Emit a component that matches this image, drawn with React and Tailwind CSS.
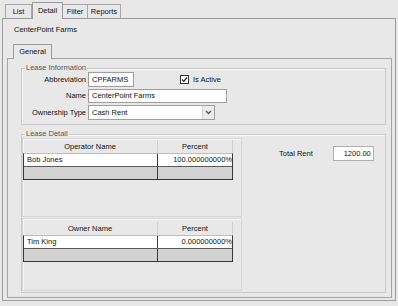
import React from 'react'

const bg = 'bg-[#e8e8e8]'

const Tab = ({ label, active, w }) => (
    <div
        className={
            active
                ? `${bg} h-[17px] -mb-[1px] border-t border-x border-[#9c9c9c] flex items-center justify-center relative z-10`
                : `${bg} h-[14px] border-t border-r border-[#a8a8a8] flex items-center justify-center`
        }
        style={{ width: w }}
    >
        {label}
    </div>
)

const Grid = ({ title, name, percent }) => (
    <div className="w-[210px]">
        <div className="flex h-[13px] items-center">
            <div className="w-[135px] h-full flex items-center justify-center border-r border-[#d0d0d0]">{title}</div>
            <div className="flex-1 h-full flex items-center justify-center border-r border-[#d0d0d0]">Percent</div>
        </div>
        <div className="border-x border-b border-[#3a3a3a] border-t border-t-[#bdbdbd]">
            <div className="flex h-[13px] bg-white border-b border-[#5a5a5a]">
                <div className="w-[134px] flex items-center pl-[3px] border-r border-[#3a3a3a]">{name}</div>
                <div className="flex-1 flex items-center justify-end overflow-hidden whitespace-nowrap pr-0">{percent}</div>
            </div>
            <div className="flex h-[12px] bg-[#d2d2d2]">
                <div className="w-[134px] border-r border-[#3a3a3a]"></div>
                <div className="flex-1"></div>
            </div>
        </div>
    </div>
)

const Legend = ({ children }) => (
    <div className={`-mt-[6px] ml-[3px] px-[1px] h-[9px] leading-[9px] w-fit text-[#555] ${bg}`}>{children}</div>
)

export default function App() {
    return (
        <div className={`w-[398px] h-[306px] ${bg} overflow-hidden font-['Liberation_Sans',Arial,sans-serif] text-[7.5px] leading-none text-[#111]`}>
            {/* top tabs */}
            <div className="mx-[2px] h-[19px] flex items-end pl-[3px] border-b border-[#9c9c9c]">
                <div className="h-[14px] w-[27px] border-l border-t border-r border-[#a8a8a8] flex items-center justify-center">List</div>
                <Tab label="Detail" active w={31} />
                <Tab label="Filter" w={25} />
                <Tab label="Reports" w={33} />
            </div>

            {/* outer panel */}
            <div className="mx-[2px] h-[282px] border-x border-b border-[#9c9c9c]">
                <div className="h-[25px] pl-[11px] pt-[7px]">CenterPoint Farms</div>

                <div className="ml-[10px] w-[39px] h-[15px] -mb-[1px] border-t border-x border-[#9c9c9c] flex items-center justify-center relative z-10 bg-[#e8e8e8]">
                    General
                </div>

                {/* inner panel */}
                <div className="ml-[4px] w-[385px] h-[240px] border border-[#a4a4a4]">
                    {/* Lease Information */}
                    <div className="ml-[13px] mt-[9px] w-[365px] h-[57px] border border-[#cacaca] shadow-[inset_1px_1px_0_#fafafa]">
                        <Legend>Lease Information</Legend>
                        <div className="flex items-center h-[15px]">
                            <div className="w-[66px] pr-[2px] text-right">Abbreviation</div>
                            <div className="w-[46px] h-[15px] bg-white border border-[#9e9e9e] flex items-center pl-[3px]">CPFARMS</div>
                            <div className="ml-[46px] w-[9px] h-[9px] border border-[#333] bg-white flex items-center justify-center">
                                <svg width="7" height="7" viewBox="0 0 7 7">
                                    <path d="M1 3.5 L2.8 5.3 L6 1.5" fill="none" stroke="#222" strokeWidth="1.2" />
                                </svg>
                            </div>
                            <div className="ml-[4px]">Is Active</div>
                        </div>
                        <div className="flex items-center h-[14px] mt-[2px]">
                            <div className="w-[66px] pr-[2px] text-right">Name</div>
                            <div className="w-[139px] h-[14px] bg-white border border-[#9e9e9e] flex items-center pl-[3px]">CenterPoint Farms</div>
                        </div>
                        <div className="flex items-center h-[15px] mt-[2px]">
                            <div className="w-[66px] pr-[2px] text-right">Ownership Type</div>
                            <div className="w-[127px] h-[15px] bg-white border border-[#9e9e9e] flex items-center">
                                <div className="flex-1 pl-[3px]">Cash Rent</div>
                                <div className="w-[12px] h-full bg-[#ececec] border-l border-[#d0d0d0] flex items-center justify-center">
                                    <svg width="7" height="5" viewBox="0 0 7 5">
                                        <path d="M1 1 L3.5 3.5 L6 1" fill="none" stroke="#555" strokeWidth="1.3" />
                                    </svg>
                                </div>
                            </div>
                        </div>
                    </div>

                    {/* Lease Detail */}
                    <div className="ml-[13px] mt-[9px] w-[365px] h-[159px] border border-[#cacaca] shadow-[inset_1px_1px_0_#fafafa]">
                        <Legend>Lease Detail</Legend>
                        <div className="flex">
                            <div className="w-[220px]">
                                <div className="h-[79px] border border-[#d6d6d6] shadow-[inset_1px_1px_0_#f8f8f8] pt-[1px]">
                                    <Grid title="Operator Name" name="Bob Jones" percent="100.000000000%" />
                                </div>
                                <div className="h-[73px] mt-[1px] border border-[#d6d6d6] shadow-[inset_1px_1px_0_#f8f8f8] pt-[3px]">
                                    <Grid title="Owner Name" name="Tim King" percent="0.000000000%" />
                                </div>
                            </div>
                            <div className="flex items-center h-[15px] mt-[8px] ml-[37px]">
                                <div>Total Rent</div>
                                <div className="ml-[20px] w-[41px] h-[15px] bg-white border border-[#b0b0b0] flex items-center justify-end pr-[2px]">1200.00</div>
                            </div>
                        </div>
                    </div>
                </div>
            </div>
        </div>
    )
}
